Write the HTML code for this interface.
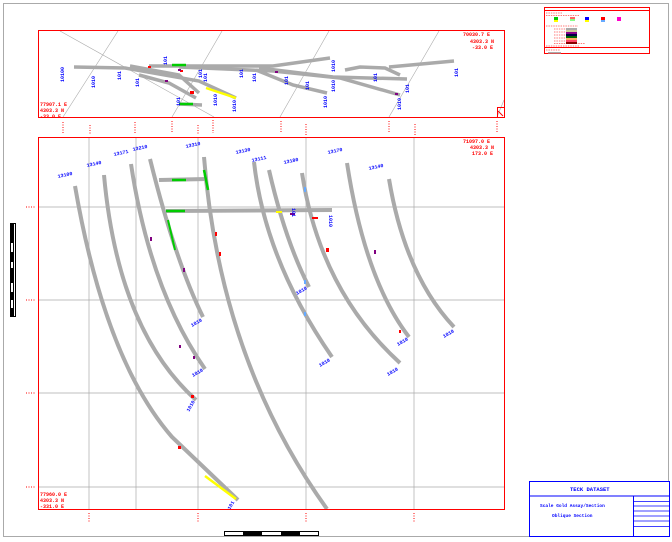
<!DOCTYPE html>
<html><head><style>
body{margin:0;background:#fff;width:672px;height:542px;overflow:hidden;font-family:"Liberation Mono",monospace}
svg{display:block}
</style></head><body>
<svg width="672" height="542" viewBox="0 0 672 542" xmlns="http://www.w3.org/2000/svg">
<rect x="3.5" y="3.5" width="665" height="533" fill="none" stroke="#aaa" stroke-width="1"/>
<!-- top panel -->
<g stroke="#aaa" stroke-width="0.6" fill="none">
<line x1="60" y1="31" x2="214" y2="117"/>
<line x1="118" y1="31" x2="63" y2="117"/>
<line x1="222" y1="31" x2="172" y2="117"/>
<line x1="329" y1="31" x2="280" y2="117"/>
<line x1="439" y1="31" x2="389" y2="117"/>
<line x1="504" y1="100" x2="497" y2="117"/>
</g>
<g stroke="#aaa" stroke-width="3.5" fill="none">
<path d="M74 67 L125 68 L199 81 L236 98"/>
<path d="M130 66 L179 75 L199 93"/>
<path d="M139 75 L169 83 L196 98"/>
<path d="M149 66 L273 66 L330 58"/>
<path d="M179 67 L273 71 L340 78 L400 95"/>
<path d="M256 70 L293 85 L327 93"/>
<path d="M259 68 L333 77 L407 79"/>
<path d="M345 70 L360 67 L385 68 L400 75"/>
<path d="M389 67 L454 61"/>
<path d="M179 104 L202 105"/>
</g>
<path d="M206 88 L236 98" stroke="#ff0" stroke-width="2.5"/>
<path d="M172 65 L186 65" stroke="#0c0" stroke-width="2.5"/>
<path d="M179 104 L193 104" stroke="#0c0" stroke-width="2.5"/>
<g fill="#f00"><rect x="190" y="91" width="4" height="3"/><rect x="148" y="66" width="3" height="2"/><rect x="180" y="70" width="3" height="2"/></g>
<g fill="#800080"><rect x="178" y="69" width="3" height="2"/><rect x="275" y="71" width="3" height="2"/><rect x="395" y="93" width="3" height="2"/><rect x="165" y="80" width="3" height="2"/></g>
<g fill="#00f" font-size="5" font-weight="bold">
<text x="64" y="82" transform="rotate(-90 64 82)">10100</text>
<text x="95" y="88" transform="rotate(-90 95 88)">1010</text>
<text x="121" y="80" transform="rotate(-90 121 80)">101</text>
<text x="139" y="87" transform="rotate(-90 139 87)">101</text>
<text x="167" y="65" transform="rotate(-90 167 65)">101</text>
<text x="180" y="106" transform="rotate(-90 180 106)">101</text>
<text x="202" y="78" transform="rotate(-90 202 78)">101</text>
<text x="207" y="82" transform="rotate(-90 207 82)">101</text>
<text x="217" y="106" transform="rotate(-90 217 106)">1010</text>
<text x="236" y="112" transform="rotate(-90 236 112)">1010</text>
<text x="243" y="78" transform="rotate(-90 243 78)">101</text>
<text x="256" y="82" transform="rotate(-90 256 82)">101</text>
<text x="288" y="85" transform="rotate(-90 288 85)">101</text>
<text x="309" y="90" transform="rotate(-90 309 90)">101</text>
<text x="327" y="108" transform="rotate(-90 327 108)">1010</text>
<text x="335" y="72" transform="rotate(-90 335 72)">1010</text>
<text x="335" y="92" transform="rotate(-90 335 92)">1010</text>
<text x="377" y="82" transform="rotate(-90 377 82)">101</text>
<text x="401" y="110" transform="rotate(-90 401 110)">1010</text>
<text x="409" y="93" transform="rotate(-90 409 93)">101</text>
<text x="458" y="77" transform="rotate(-90 458 77)">101</text>
</g>
<rect x="38.5" y="30.5" width="466" height="87" fill="none" stroke="#f00"/>
<rect x="497.5" y="107.5" width="7" height="10" fill="none" stroke="#f00"/>
<path d="M498 111 L503 116" stroke="#f00"/>
<g fill="#f00" font-size="5" font-weight="bold">
<text x="463" y="36">70030.7 E</text><text x="470" y="43">4303.3 N</text><text x="472" y="49">-33.0 E</text>
<text x="40" y="106">77907.1 E</text><text x="40" y="112">4303.3 N</text><text x="40" y="118">-33.0 E</text>
<text x="463" y="143">71097.0 E</text><text x="470" y="149">4303.3 N</text><text x="472" y="155">173.0 E</text>
<text x="40" y="496">77960.0 E</text><text x="40" y="502">4303.3 N</text><text x="40" y="508">-331.0 E</text>
</g>
<g stroke="#f00" stroke-width="1" stroke-dasharray="1,1.5">
<line x1="63" y1="122" x2="63" y2="133"/><line x1="90" y1="125" x2="90" y2="135"/>
<line x1="135" y1="122" x2="135" y2="133"/><line x1="172" y1="121" x2="172" y2="133"/>
<line x1="198" y1="125" x2="198" y2="135"/><line x1="213" y1="120" x2="213" y2="133"/>
<line x1="281" y1="121" x2="281" y2="133"/><line x1="306" y1="124" x2="306" y2="135"/>
<line x1="389" y1="121" x2="389" y2="133"/><line x1="415" y1="124" x2="415" y2="135"/>
<line x1="497" y1="121" x2="497" y2="133"/>
<line x1="89" y1="513" x2="89" y2="522"/><line x1="198" y1="513" x2="198" y2="522"/>
<line x1="306" y1="513" x2="306" y2="522"/><line x1="414" y1="513" x2="414" y2="522"/>
<line x1="26" y1="207" x2="36" y2="207"/><line x1="26" y1="300" x2="36" y2="300"/>
<line x1="26" y1="393" x2="36" y2="393"/><line x1="26" y1="487" x2="36" y2="487"/>
</g>
<!-- bottom panel grid -->
<g stroke="#aaa" stroke-width="0.7">
<line x1="89" y1="138" x2="89" y2="509"/><line x1="136" y1="138" x2="136" y2="509"/>
<line x1="198" y1="138" x2="198" y2="509"/><line x1="306" y1="138" x2="306" y2="509"/>
<line x1="414" y1="138" x2="414" y2="509"/>
<line x1="39" y1="207" x2="504" y2="207"/><line x1="39" y1="300" x2="504" y2="300"/>
<line x1="39" y1="393" x2="504" y2="393"/><line x1="39" y1="487" x2="504" y2="487"/>
</g>
<g stroke="#aaa" stroke-width="4" fill="none">
<path d="M75 186 Q105 360 172 437 L238 500"/>
<path d="M104 175 Q118 330 196 400"/>
<path d="M131 164 Q150 290 205 369"/>
<path d="M150 159 Q175 260 203 317"/>
<path d="M204 157 Q220 360 327 509"/>
<path d="M254 162 Q265 260 332 357"/>
<path d="M269 170 Q285 240 309 287"/>
<path d="M302 173 Q320 290 400 363"/>
<path d="M347 163 Q365 280 409 337"/>
<path d="M389 179 Q405 275 454 327"/>
<path d="M159 180 L207 179"/>
<path d="M166 211 L332 210"/>
</g>
<path d="M205 476 L236 499" stroke="#ff0" stroke-width="2.5"/>
<path d="M166 211 L185 211" stroke="#0c0" stroke-width="2.5"/>
<path d="M172 180 L186 180" stroke="#0c0" stroke-width="2.5"/>
<path d="M204 170 L208 190" stroke="#0c0" stroke-width="2.5"/>
<path d="M168 220 L175 250" stroke="#0c0" stroke-width="2"/>
<g fill="#f00"><rect x="215" y="232" width="2" height="4"/><rect x="219" y="252" width="2" height="4"/><rect x="191" y="395" width="3" height="3"/><rect x="178" y="446" width="3" height="3"/><rect x="326" y="248" width="3" height="4"/><rect x="399" y="330" width="2" height="3"/><rect x="312" y="217" width="6" height="2"/></g>
<g fill="#800080"><rect x="183" y="268" width="2" height="4"/><rect x="150" y="237" width="2" height="4"/><rect x="290" y="213" width="5" height="2"/><rect x="374" y="250" width="2" height="4"/><rect x="179" y="345" width="2" height="3"/><rect x="193" y="356" width="2" height="3"/></g>
<g fill="#6af"><rect x="304" y="187" width="2" height="5"/><rect x="304" y="280" width="2" height="4"/><rect x="304" y="312" width="2" height="4"/></g>
<rect x="276" y="211" width="6" height="2" fill="#ff0"/>
<g fill="#00f" font-size="5" font-weight="bold">
<text x="58" y="178" transform="rotate(-12 58 178)">13100</text>
<text x="87" y="167" transform="rotate(-12 87 167)">13140</text>
<text x="114" y="156" transform="rotate(-12 114 156)">13171</text>
<text x="133" y="151" transform="rotate(-12 133 151)">13210</text>
<text x="186" y="148" transform="rotate(-12 186 148)">13310</text>
<text x="236" y="154" transform="rotate(-12 236 154)">13130</text>
<text x="252" y="162" transform="rotate(-12 252 162)">13111</text>
<text x="284" y="164" transform="rotate(-12 284 164)">13180</text>
<text x="328" y="154" transform="rotate(-12 328 154)">13170</text>
<text x="369" y="170" transform="rotate(-12 369 170)">13140</text>
<text x="192" y="327" transform="rotate(-30 192 327)">1010</text>
<text x="193" y="377" transform="rotate(-30 193 377)">1010</text>
<text x="189" y="412" transform="rotate(-60 189 412)">1010</text>
<text x="297" y="295" transform="rotate(-30 297 295)">1010</text>
<text x="320" y="367" transform="rotate(-30 320 367)">1010</text>
<text x="388" y="376" transform="rotate(-30 388 376)">1010</text>
<text x="398" y="346" transform="rotate(-30 398 346)">1010</text>
<text x="444" y="338" transform="rotate(-30 444 338)">1010</text>
<text x="292" y="208" transform="rotate(90 292 208)">101</text>
<text x="329" y="215" transform="rotate(90 329 215)">1010</text>
<text x="230" y="510" transform="rotate(-60 230 510)">101</text>
</g>
<rect x="38.5" y="137.5" width="466" height="372" fill="none" stroke="#f00"/>
<!-- scale bars -->
<rect x="10" y="223" width="6" height="94" fill="#000"/>
<rect x="14" y="224" width="1" height="92" fill="#fff"/>
<rect x="11" y="243" width="2" height="9" fill="#fff"/><rect x="11" y="262" width="2" height="6" fill="#fff"/><rect x="11" y="283" width="2" height="9" fill="#fff"/><rect x="11" y="300" width="2" height="8" fill="#fff"/>
<rect x="224.5" y="531.5" width="94" height="4" fill="#000" stroke="#000"/>
<rect x="225" y="532" width="18" height="3" fill="#fff"/><rect x="262" y="532" width="19" height="3" fill="#fff"/><rect x="300" y="532" width="18" height="3" fill="#fff"/>
<!-- legend -->
<rect x="544.5" y="7.5" width="105" height="46" fill="#fff" stroke="#f00"/>
<line x1="544" y1="10.5" x2="650" y2="10.5" stroke="#f00"/>
<line x1="544" y1="47.5" x2="650" y2="47.5" stroke="#f00"/>
<g stroke="#f00" stroke-dasharray="0.7,1" stroke-width="0.8">
<line x1="546" y1="13" x2="562" y2="13"/><line x1="546" y1="15.5" x2="580" y2="15.5"/><line x1="546" y1="26" x2="578" y2="26"/><line x1="546" y1="46" x2="580" y2="46"/><line x1="546" y1="50" x2="560" y2="50"/>
<line x1="554" y1="29" x2="566" y2="29"/><line x1="554" y1="32" x2="566" y2="32"/><line x1="554" y1="35" x2="566" y2="35"/><line x1="554" y1="38" x2="566" y2="38"/><line x1="554" y1="41" x2="566" y2="41"/><line x1="554" y1="43.5" x2="585" y2="43.5"/>
</g>
<rect x="554" y="17" width="4" height="3" fill="#0c0"/><rect x="554" y="20" width="4" height="2" fill="#ff0"/>
<rect x="570" y="17" width="5" height="2" fill="#f66"/><rect x="570" y="19" width="5" height="2" fill="#8f8"/>
<rect x="585" y="17" width="4" height="3" fill="#00f"/><rect x="585" y="20" width="4" height="2" fill="#ff0"/>
<rect x="601" y="17" width="4" height="3" fill="#f00"/><rect x="601" y="20" width="4" height="2" fill="#6af"/>
<rect x="617" y="17" width="4" height="4" fill="#f0c"/>
<rect x="566" y="28" width="11" height="2" fill="#aaa"/><rect x="566" y="30" width="11" height="2" fill="#cc9"/><rect x="566" y="32" width="11" height="2" fill="#808"/><rect x="566" y="34" width="11" height="2" fill="#004"/><rect x="566" y="36" width="11" height="2" fill="#060"/><rect x="566" y="38" width="11" height="2" fill="#fa6"/><rect x="566" y="40" width="11" height="2" fill="#f46"/><rect x="566" y="42" width="11" height="2" fill="#800"/>
<rect x="548" y="52" width="13" height="1.5" fill="#aaa"/>
<!-- title block -->
<rect x="529.5" y="481.5" width="140" height="55" fill="#fff" stroke="#00f"/>
<line x1="529" y1="496" x2="670" y2="496" stroke="#00f"/>
<line x1="633.5" y1="496" x2="633.5" y2="537" stroke="#00f"/>
<g stroke="#00f" stroke-width="0.8"><line x1="634" y1="501.5" x2="670" y2="501.5"/><line x1="634" y1="506" x2="670" y2="506"/><line x1="634" y1="511" x2="670" y2="511"/><line x1="634" y1="516" x2="670" y2="516"/><line x1="634" y1="521" x2="670" y2="521"/><line x1="634" y1="526.5" x2="670" y2="526.5"/></g>
<text x="570" y="491" fill="#00f" font-size="5.5" font-weight="bold">TECK DATASET</text>
<text x="540" y="507" fill="#00f" font-size="4.5" font-weight="bold">Scale Gold Assay/Section</text>
<text x="552" y="517" fill="#00f" font-size="4.5" font-weight="bold">Oblique Section</text>
</svg>
</body></html>
